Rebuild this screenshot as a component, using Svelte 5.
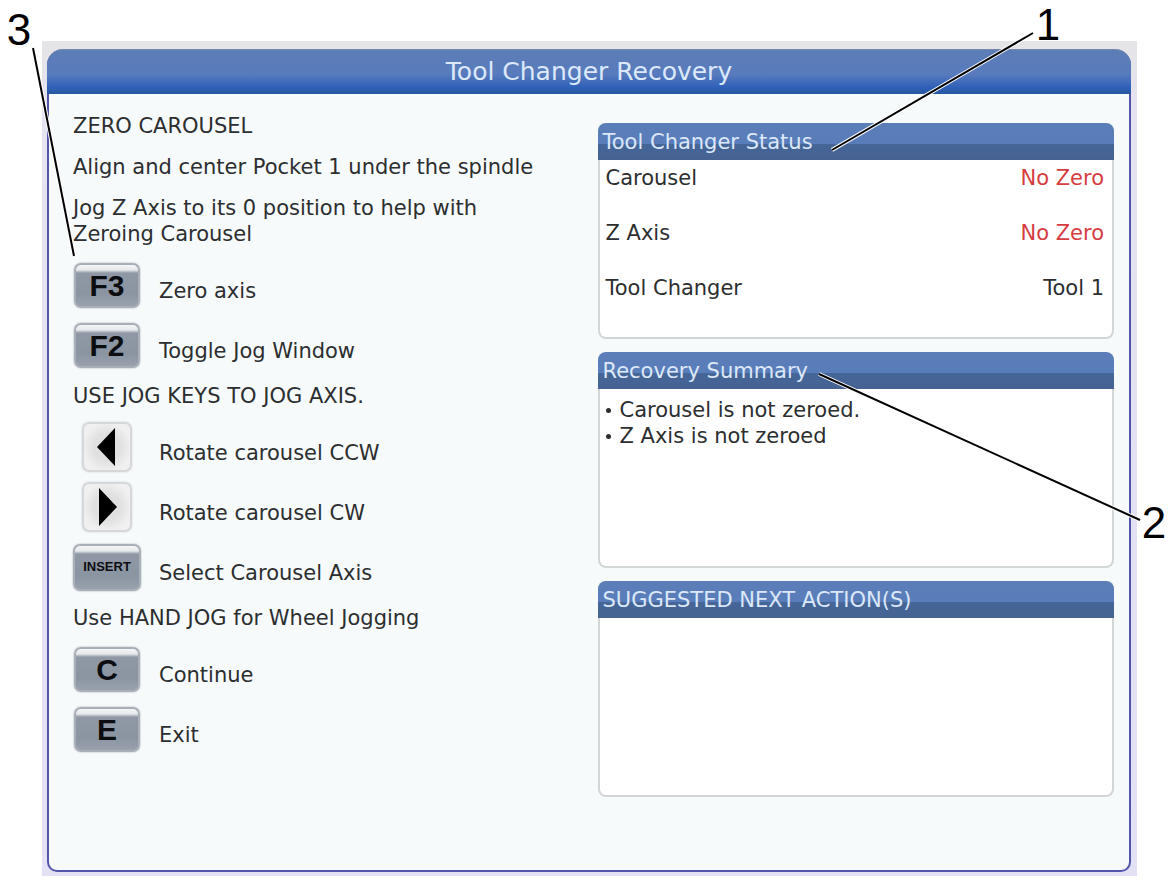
<script>
    const axisKeys = [
        { key: "F3", label: "Zero axis" },
        { key: "F2", label: "Toggle Jog Window" }
    ];

    const jogKeys = [
        { key: "left", label: "Rotate carousel CCW" },
        { key: "right", label: "Rotate carousel CW" },
        { key: "INSERT", label: "Select Carousel Axis" }
    ];

    const exitKeys = [
        { key: "C", label: "Continue" },
        { key: "E", label: "Exit" }
    ];

    const status = [
        { name: "Carousel", value: "No Zero", alarm: true },
        { name: "Z Axis", value: "No Zero", alarm: true },
        { name: "Tool Changer", value: "Tool 1", alarm: false }
    ];

    const summary = ["Carousel is not zeroed.", "Z Axis is not zeroed"];

    const callouts = [
        { number: 1, x: 1048, y: 40, line: [1033, 33, 832, 150] },
        { number: 2, x: 1154, y: 538, line: [1140, 520, 819, 374] },
        { number: 3, x: 19, y: 45, line: [33, 48, 74, 256] }
    ];
</script>

{#snippet keyRow(item)}
    <div class="key-row">
        <div class="key-cell">
            {#if item.key === "left" || item.key === "right"}
                <button class="key arrow" aria-label={item.label}>
                    <svg width="20" height="40" viewBox="0 0 20 40" aria-hidden="true">
                        {#if item.key === "left"}
                            <path d="M18 1V39L0 20Z" />
                        {:else}
                            <path d="M2 1V39L20 20Z" />
                        {/if}
                    </svg>
                </button>
            {:else}
                <button class="key" class:wide={item.key === "INSERT"}>{item.key}</button>
            {/if}
        </div>
        <span class="key-label">{item.label}</span>
    </div>
{/snippet}

<main class="page">
    <div class="frame">
        <section class="window">
            <h1>Tool Changer Recovery</h1>
            <div class="content">
                <div class="steps">
                    <p>ZERO CAROUSEL</p>
                    <p>Align and center Pocket 1 under the spindle</p>
                    <p>Jog Z Axis to its 0 position to help with<br />Zeroing Carousel</p>
                    {#each axisKeys as item}
                        {@render keyRow(item)}
                    {/each}
                    <p class="hint">USE JOG KEYS TO JOG AXIS.</p>
                    {#each jogKeys as item}
                        {@render keyRow(item)}
                    {/each}
                    <p class="hint">Use HAND JOG for Wheel Jogging</p>
                    {#each exitKeys as item}
                        {@render keyRow(item)}
                    {/each}
                </div>
                <div class="panels">
                    <section class="panel">
                        <h2>Tool Changer Status</h2>
                        <table>
                            <tbody>
                                {#each status as row}
                                    <tr>
                                        <th scope="row">{row.name}</th>
                                        <td class:alarm={row.alarm}>{row.value}</td>
                                    </tr>
                                {/each}
                            </tbody>
                        </table>
                    </section>
                    <section class="panel">
                        <h2>Recovery Summary</h2>
                        <ul>
                            {#each summary as line}
                                <li>{line}</li>
                            {/each}
                        </ul>
                    </section>
                    <section class="panel">
                        <h2>SUGGESTED NEXT ACTION(S)</h2>
                    </section>
                </div>
            </div>
        </section>
    </div>

    <!-- numbered leader lines over the screen -->
    <svg class="callouts" viewBox="0 0 1176 881">
        {#each callouts as { number, x, y, line: [x1, y1, x2, y2] }}
            <line class="halo" {x1} {y1} {x2} {y2} />
            <line {x1} {y1} {x2} {y2} />
            <text {x} {y}>{number}</text>
        {/each}
    </svg>
</main>

<style>
    :global(body) {
        background: #fff;
    }
    .page {
        position: relative;
        box-sizing: border-box;
        min-height: 100vh;
        padding: 41px 39px 5px 42px;
        display: flex;
        font-family: "DejaVu Sans", sans-serif;
        font-size: 21px;
        font-variant-numeric: slashed-zero;
        line-height: 26px;
        color: #2c2e30;
    }
    .frame {
        flex: 1;
        display: flex;
        padding: 8px 6px 4px 5px;
        background: linear-gradient(#e5e5e7, #e4e3ef 60px, #e2e1f6);
    }
    .window {
        flex: 1;
        display: flex;
        flex-direction: column;
        border: 2px solid #5355a8;
        border-top: 0;
        border-radius: 16px 16px 10px 10px;
        background: #f6fafb;
    }
    h1 {
        margin: 0 -2px;
        border-radius: 16px 16px 0 0;
        border-top: 1px solid #7588ad;
        background: linear-gradient(#5c7db6, #587bbd 55%, #2f60b8 85%, #2856a0);
        color: #dce9fb;
        font-size: 25px;
        font-weight: normal;
        line-height: 44px;
        text-align: center;
    }
    .content {
        flex: 1;
        display: grid;
        grid-template-columns: minmax(0, 1fr) minmax(0, 1fr);
        gap: 8px;
        padding: 19px 15px 0 24px;
    }
    p {
        margin: 0 0 15px;
    }
    p:nth-of-type(3) {
        margin-bottom: 8px;
    }
    .hint {
        margin: 8px 0;
    }
    .key-row {
        display: flex;
        gap: 18px;
        height: 60px;
        align-items: center;
    }
    .key-cell {
        width: 68px;
        display: flex;
        justify-content: center;
    }
    .key-label {
        padding-top: 12px;
    }
    .key {
        width: 66px;
        height: 45px;
        padding: 2px 0 0;
        border: 2px solid #a9afb6;
        border-radius: 7px;
        background: linear-gradient(#f4f6f8, #e6e9ec 5px, #8f98a4 8px, #8b95a2 70%, #98a1ac);
        box-shadow: 0 0 2px #a4a9af;
        color: #0c0d10;
        font-family: "Liberation Sans", Arial, sans-serif;
        font-size: 30px;
        font-weight: bold;
        line-height: 36px;
    }
    .key.wide {
        width: 68px;
        height: 47px;
        padding: 0;
        font-size: 13px;
    }
    .key.arrow {
        width: 50px;
        height: 50px;
        display: flex;
        align-items: center;
        justify-content: center;
        padding: 0;
        border-color: #d6d7d8;
        background: radial-gradient(#e0e0e1 40%, #f0f0f1 75%);
        box-shadow: 0 0 2px #d0d1d3;
    }
    .panels {
        display: flex;
        flex-direction: column;
        gap: 13px;
        padding-top: 10px;
    }
    .panel {
        box-sizing: border-box;
        min-height: 216px;
        border: 2px solid #d3d6d7;
        border-top: 0;
        border-radius: 8px;
        background: #fff;
    }
    h2 {
        margin: 0 -2px;
        padding: 1px 5px 0;
        border-radius: 8px 8px 0 0;
        background: linear-gradient(#5b7eb8, #597dba 21px, #456698 21px, #466293);
        color: #dce8f8;
        font-size: 21px;
        font-weight: normal;
        line-height: 36px;
    }
    table {
        width: 100%;
        border-collapse: collapse;
    }
    th,
    td {
        height: 50px;
        padding: 5px 6px 0;
        font-weight: normal;
        text-align: left;
        vertical-align: top;
    }
    td {
        padding-right: 8px;
        text-align: right;
    }
    .alarm {
        color: #d63c40;
    }
    ul {
        margin: 0;
        padding: 8px 4px 0;
        list-style: none;
    }
    li {
        display: flex;
        gap: 9px;
    }
    li::before {
        content: "";
        width: 5px;
        height: 5px;
        margin: 11px 0 0 2px;
        border-radius: 50%;
        background: #2c2e30;
    }
    .callouts {
        position: absolute;
        top: 0;
        left: 0;
        width: 100%;
        pointer-events: none;
    }
    .callouts line {
        stroke: #000;
        stroke-width: 2;
    }
    .callouts .halo {
        stroke: #fff;
        stroke-width: 4;
    }
    .callouts text {
        font-family: "Liberation Sans", Arial, sans-serif;
        font-size: 44px;
        text-anchor: middle;
        fill: #000;
    }
</style>
